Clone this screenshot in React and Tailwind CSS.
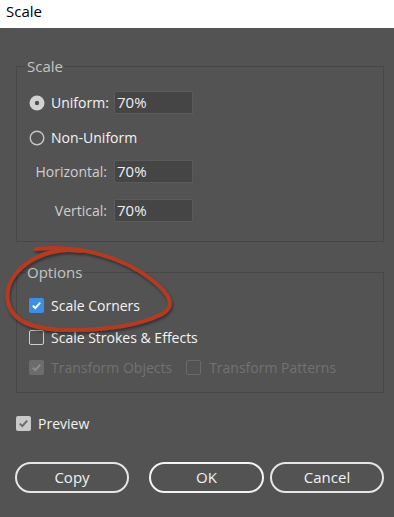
import React from 'react'

const FONT = "font-['Open_Sans','Noto_Sans',sans-serif]"

function Radio({ checked }) {
  return (
    <svg width="16" height="16" viewBox="0 0 16 16" className="shrink-0">
      {checked ? (
        <>
          <circle cx="8" cy="8" r="7.5" fill="#d2d2d2" />
          <circle cx="8" cy="8" r="2.2" fill="#505050" />
        </>
      ) : (
        <circle cx="8" cy="8" r="6.8" fill="none" stroke="#c6c6c6" strokeWidth="1.4" />
      )}
    </svg>
  )
}

// variant: blue | empty | disabledOn | disabledOff | grey
function Check({ variant }) {
  const box = {
    blue: 'bg-[#3d8ee6]',
    empty: 'border-[1.5px] border-[#cfcfcf]',
    disabledOn: 'bg-[#6c6c6c]',
    disabledOff: 'border-[1.5px] border-[#6a6a6a]',
    grey: 'bg-[#c9c9c9]',
  }[variant]
  const tick = { blue: '#ffffff', disabledOn: '#8e8e8e', grey: '#6a6a6a' }[variant]
  return (
    <div className={`w-[15px] h-[15px] rounded-[2px] shrink-0 flex items-center justify-center ${box}`}>
      {tick && (
        <svg width="11" height="11" viewBox="0 0 11 11">
          <path d="M1.8 5.6 L4.3 8.1 L9.2 2.6" fill="none" stroke={tick} strokeWidth="2" />
        </svg>
      )}
    </div>
  )
}

function Field({ value }) {
  return (
    <div className="w-[79px] h-[23px] bg-[#454545] border border-[#5a5a5a] flex items-center pl-[2px] text-[15px] text-[#eeeeee]">
      {value}
    </div>
  )
}

function Button({ children, main }) {
  return (
    <div
      className={`h-[31px] rounded-full flex items-center justify-center text-[15px] text-[#f2f2f2] ${main ? 'border-[2.5px] border-[#f4f4f4]' : 'border-2 border-[#e6e6e6]'}`}
    >
      {children}
    </div>
  )
}

export default function App() {
  return (
    <div className={`w-[394px] h-[517px] bg-[#535353] relative overflow-hidden ${FONT}`}>
      {/* title bar */}
      <div className="h-[28px] bg-white pl-[6px] text-[15px] leading-[22px] text-black">Scale</div>

      <div className="pl-4 pr-[10px]">
        {/* ── Scale ─────────────────────────── */}
        <fieldset className="mt-[30px] border border-[#474747] pb-[19px]">
          <legend className="ml-[9px] px-[1px] text-[15px] leading-[16px] text-[#c4c4c4]">Scale</legend>

          <div className="pl-3">
            <div className="mt-[17px] h-[23px] flex items-center">
              <Radio checked />
              <span className="ml-[6px] w-[63px] text-[14px] text-[#f4f4f4]">Uniform:</span>
              <Field value="70%" />
            </div>

            <div className="mt-[12px] h-[23px] flex items-center">
              <Radio />
              <span className="ml-[6px] text-[14px] text-[#f4f4f4]">Non-Uniform</span>
            </div>

            <div className="mt-[11px] h-[23px] flex items-center">
              <span className="w-[85px] pr-[7px] text-right text-[14px] text-[#cfcfcf]">Horizontal:</span>
              <Field value="70%" />
            </div>

            <div className="mt-4 h-[23px] flex items-center">
              <span className="w-[85px] pr-[7px] text-right text-[14px] text-[#cfcfcf]">Vertical:</span>
              <Field value="70%" />
            </div>
          </div>
        </fieldset>

        {/* ── Options ───────────────────────── */}
        <fieldset className="mt-[22px] border border-[#474747] pb-[15px]">
          <legend className="ml-[9px] px-[1px] text-[15px] leading-[16px] text-[#c4c4c4]">Options</legend>

          <div className="pl-3 text-[14px]">
            <div className="mt-[15px] h-5 flex items-center gap-[7px] text-[#f4f4f4]">
              <Check variant="blue" />
              <span>Scale Corners</span>
            </div>
            <div className="mt-3 h-5 flex items-center gap-[7px] text-[#f4f4f4]">
              <Check variant="empty" />
              <span>Scale Strokes &amp; Effects</span>
            </div>
            <div className="mt-[10px] h-5 flex items-center text-[#727272]">
              <Check variant="disabledOn" />
              <span className="ml-[7px]">Transform Objects</span>
              <div className="ml-[14px]">
                <Check variant="disabledOff" />
              </div>
              <span className="ml-[8px]">Transform Patterns</span>
            </div>
          </div>
        </fieldset>

        {/* ── Preview ───────────────────────── */}
        <div className="mt-5 h-5 flex items-center gap-[7px] text-[14px] text-[#f4f4f4]">
          <Check variant="grey" />
          <span>Preview</span>
        </div>

        {/* ── Buttons ───────────────────────── */}
        <div className="mt-[29px] -ml-px flex">
          <div className="w-[114px]">
            <Button>Copy</Button>
          </div>
          <div className="ml-[20px] w-[115px]">
            <Button main>OK</Button>
          </div>
          <div className="ml-[6px] w-[114px]">
            <Button>Cancel</Button>
          </div>
        </div>
      </div>

      {/* hand-drawn annotation around Scale Corners */}
      <svg className="absolute inset-0 pointer-events-none" width="394" height="517" viewBox="0 0 394 517">
        <defs>
          <filter id="ink" x="-10%" y="-10%" width="120%" height="130%">
            <feDropShadow dx="1" dy="2" stdDeviation="1.5" floodColor="#000" floodOpacity="0.45" />
          </filter>
        </defs>
        <path
          d="M36 249 C 80 244, 125 258, 152 280 C 170 294, 176 306, 162 314 C 140 325, 105 330, 70 330 C 35 330, 12 322, 8 302 C 4 282, 20 263, 45 254 C 58 250, 70 249, 80 251"
          fill="none"
          stroke="#b33a24"
          strokeWidth="4"
          strokeLinecap="round"
          filter="url(#ink)"
        />
      </svg>
    </div>
  )
}
